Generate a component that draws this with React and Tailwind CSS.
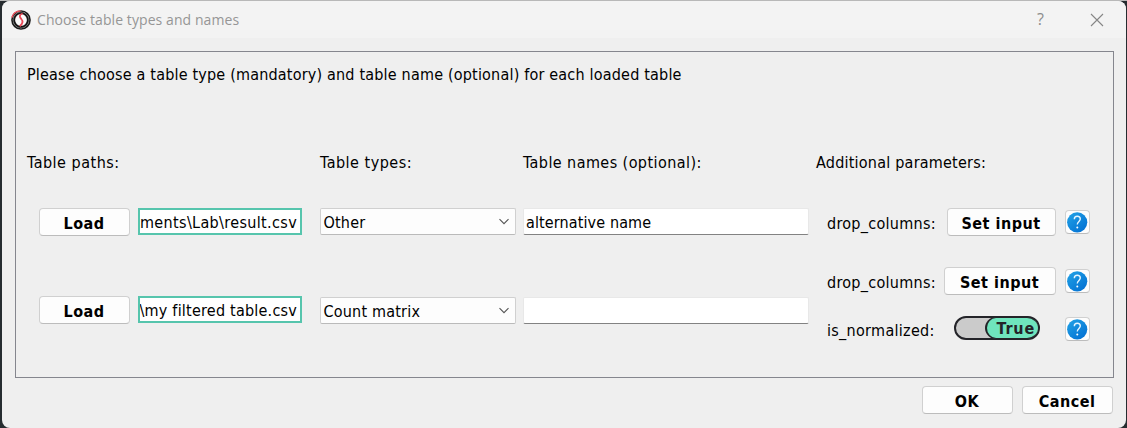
const buttonBase =
  "shrink-0 flex justify-center rounded-[4px] border border-[#d0d0d0] border-b-[#bcbcbc] bg-[#fdfdfd] h-7 pt-[5px] pr-px font-bold tracking-[0.5px] leading-[19px] whitespace-nowrap";

function Button({ className, children }) {
  return <button className={`${buttonBase} ${className}`}>{children}</button>;
}

function AppLogo() {
  return (
    <svg width="20" height="20" viewBox="0 0 20 20" fill="none" className="shrink-0">
      <circle cx="10" cy="10" r="9" stroke="#1b1b1b" strokeWidth="1.7" />
      <circle cx="10" cy="10" r="7.8" stroke="#777" strokeWidth="1" />
      <circle cx="10" cy="10" r="6.8" fill="#fafafa" stroke="#151515" strokeWidth="1.8" />
      <path d="M0.9 7.5C1.8 4 5 1 9.5 1" stroke="#ee5560" strokeWidth="1.5" />
      <path d="M11.6 3.5C8 4.5 8.3 7 10.3 9c2 2.2 1.5 4.8-1.6 7.2" stroke="#ea4b59" strokeWidth="1.8" />
    </svg>
  );
}

function PathField({ children }) {
  return (
    <div className="flex h-[27px] w-[164px] shrink-0 justify-end overflow-hidden border-2 border-[#56c5ad] bg-white pr-[3px] pt-[3px] leading-[19px] whitespace-nowrap">
      {children}
    </div>
  );
}

function Select({ children }) {
  return (
    <div className="flex h-[27px] w-[196px] justify-between rounded-[2px] border border-[#d0d0d0] border-b-[#bababa] bg-[#fdfdfd] pl-[2.5px] pr-[5px] pt-1 leading-[19px] tracking-[0.2px]">
      <span>{children}</span>
      <svg width="12" height="8" viewBox="0 0 12 8" fill="none" className="mt-[5px]">
        <path d="M1.5 1.2L6 5.7L10.5 1.2" stroke="#555" strokeWidth="1.1" />
      </svg>
    </div>
  );
}

function NameField({ children }) {
  return (
    <div className="h-[27px] w-[286px] rounded-[2px] border border-[#e8e8e8] border-b-[#828282] bg-white pl-[2px] pt-1 leading-[19px] tracking-[0.12px]">
      {children}
    </div>
  );
}

function HelpButton({ className }) {
  return (
    <button className={`flex h-6 w-[25px] shrink-0 items-center justify-center rounded-[4px] border border-[#d0d0d0] border-b-[#bcbcbc] bg-[#fdfdfd] ${className}`}>
      <svg width="21" height="21" viewBox="0 0 21 21" fill="none" className="shrink-0">
        <defs>
          <linearGradient id="help" x1="3" y1="2" x2="18" y2="19" gradientUnits="userSpaceOnUse">
            <stop stopColor="#1e9de4" />
            <stop offset="1" stopColor="#0371d3" />
          </linearGradient>
        </defs>
        <circle cx="10.2" cy="10.3" r="10.1" fill="url(#help)" />
        <path d="M7.3 7.2C7.3 5.3 8.6 4.3 10.3 4.3s3 1 3 2.8c0 2.2-3 2.6-3 5.5" stroke="#e4f5ff" strokeWidth="1.4" />
        <circle cx="10.3" cy="15.5" r="1" fill="#fff" />
      </svg>
    </button>
  );
}

function Toggle() {
  return (
    <div className="flex h-6 w-[86px] shrink-0 justify-end rounded-full border-2 border-[#242429] bg-[#cbcbcb]">
      <div className="-my-px flex w-[53px] justify-end rounded-full border-y border-l-2 border-[#242429] bg-[#6fe5bd] pr-[3px] pt-px font-bold leading-[20px] tracking-[0.8px] text-[#242429]">
        True
      </div>
    </div>
  );
}

export default function App() {
  return (
    <div className="h-[428px] w-[1127px] overflow-hidden border-t border-[#b8b8b8] bg-[#262c30] pl-[2px] pr-px font-['DejaVu_Sans_Condensed','DejaVu_Sans',sans-serif] text-[16px] text-black">
      <div className="h-[427px] overflow-hidden rounded-[8px] bg-[#efefef]">
        <header className="flex h-[37px] items-center bg-[#f3f3f3] pl-[9px] pr-[22px]">
          <AppLogo />
          <h1 className="ml-[6px] font-['Open_Sans',sans-serif] text-[14px] leading-5 tracking-[0.08px] text-[#969696]">
            Choose table types and names
          </h1>
          <span className="ml-auto font-['Open_Sans',sans-serif] text-[16px] leading-5 text-[#8c8c8c] -mt-[2px]">?</span>
          <svg width="14" height="14" viewBox="0 0 14 14" fill="none" className="ml-[46px]">
            <path d="M1 1L13 13M13 1L1 13" stroke="#868686" strokeWidth="1.1" />
          </svg>
        </header>

        <main className="ml-[13px] mt-[13px] h-[327px] w-[1099px] border border-[#85868e] pl-[11px] pt-[13px]">
          <p className="leading-[19px] tracking-[0.19px] whitespace-nowrap">
            Please choose a table type (mandatory) and table name (optional) for each loaded table
          </p>
          <div className="mt-[69px] flex">
            <section className="w-[293px]">
              <h2 className="leading-[19px] tracking-[0.5px]">Table paths:</h2>
              <div className="ml-3 mt-9 flex gap-2">
                <Button className="w-[91px]">Load</Button>
                <PathField>
                  <span className="tracking-[0.35px]">ments\Lab\result.csv</span>
                </PathField>
              </div>
              <div className="ml-3 mt-[60px] flex gap-2">
                <Button className="w-[91px]">Load</Button>
                <PathField>
                  <span className="tracking-[0.22px]">\my filtered table.csv</span>
                </PathField>
              </div>
            </section>
            <section className="w-[203px]">
              <h2 className="mb-9 leading-[19px] tracking-[0.5px]">Table types:</h2>
              <Select>Other</Select>
              <div className="h-[62px]" />
              <Select>Count matrix</Select>
            </section>
            <section className="w-[293px]">
              <h2 className="mb-9 leading-[19px] tracking-[0.43px]">Table names (optional):</h2>
              <NameField>alternative name</NameField>
              <div className="h-[62px]" />
              <NameField />
            </section>
            <section className="w-[275px]">
              <h2 className="leading-[19px] tracking-[0.22px]">Additional parameters:</h2>
              <div className="ml-[11px] mt-9 flex">
                <span className="mt-[6px] w-[120px] leading-[19px] tracking-[0.28px]">drop_columns:</span>
                <Button className="w-[109px]">Set input</Button>
                <HelpButton className="ml-[9px] mt-[2px]" />
              </div>
              <div className="ml-[11px] mt-[31px] flex">
                <span className="mt-[6px] w-[117px] leading-[19px] tracking-[0.28px]">drop_columns:</span>
                <Button className="w-[112px]">Set input</Button>
                <HelpButton className="ml-[9px] mt-[2px]" />
              </div>
              <div className="ml-[11px] mt-[21px] flex">
                <span className="mt-[5px] w-[127px] leading-[19px] tracking-[0.3px]">is_normalized:</span>
                <Toggle />
                <HelpButton className="ml-[25px] mt-px" />
              </div>
            </section>
          </div>
        </main>

        <footer className="mr-[13px] mt-2 flex justify-end gap-[9px]">
          <Button className="w-[91px]">OK</Button>
          <Button className="w-[91px]">Cancel</Button>
        </footer>
      </div>
    </div>
  );
}
